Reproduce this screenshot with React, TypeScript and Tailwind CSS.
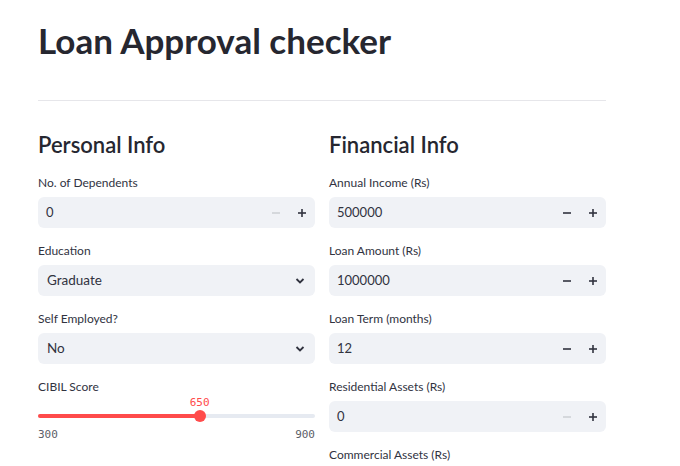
import React from "react";

const font = { fontFamily: 'Lato, "Noto Sans", sans-serif' };

function Label({ children }: { children: React.ReactNode }) {
  return (
    <div className="h-[16px] leading-[16px] text-[12px] text-[#31333f]">{children}</div>
  );
}

function Minus({ disabled }: { disabled?: boolean }) {
  return (
    <svg width="10" height="10" viewBox="0 0 10 10">
      <line x1="1" y1="5" x2="9" y2="5" stroke={disabled ? "#cfd1d6" : "#31333f"} strokeWidth="1.6" />
    </svg>
  );
}
function Plus() {
  return (
    <svg width="10" height="10" viewBox="0 0 10 10">
      <line x1="1" y1="5" x2="9" y2="5" stroke="#31333f" strokeWidth="1.6" />
      <line x1="5" y1="1" x2="5" y2="9" stroke="#31333f" strokeWidth="1.6" />
    </svg>
  );
}

function NumberInput({ label, value, minDisabled }: { label: string; value: string; minDisabled?: boolean }) {
  return (
    <div className="flex flex-col">
      <Label>{label}</Label>
      <div className="mt-[6px] h-[31px] rounded-[6px] bg-[#f0f2f6] flex items-center">
        <div className="flex-1 pl-[8px] text-[13px] text-[#31333f]">{value}</div>
        <div className="w-[26px] h-full flex items-center justify-center">
          <Minus disabled={minDisabled} />
        </div>
        <div className="w-[26px] h-full flex items-center justify-center">
          <Plus />
        </div>
      </div>
      <div className="h-[15px]" />
    </div>
  );
}

function Select({ label, value }: { label: string; value: string }) {
  return (
    <div className="flex flex-col">
      <Label>{label}</Label>
      <div className="mt-[6px] h-[31px] rounded-[6px] bg-[#f0f2f6] flex items-center">
        <div className="flex-1 pl-[9px] text-[13.5px] text-[#31333f]">{value}</div>
        <div className="w-[30px] flex items-center justify-center">
          <svg width="10" height="8" viewBox="0 0 10 8">
            <path d="M1.5 2 L5 5.5 L8.5 2" fill="none" stroke="#31333f" strokeWidth="1.8" />
          </svg>
        </div>
      </div>
      <div className="h-[15px]" />
    </div>
  );
}

function Slider() {
  const pct = (650 - 300) / 600;
  const mono = { fontFamily: '"DejaVu Sans Mono", "Liberation Mono", monospace' };
  return (
    <div className="flex flex-col">
      <Label>CIBIL Score</Label>
      <div className="relative h-[48px]">
        <div
          className="absolute top-[1px] text-[11px] leading-[14px] text-[#ff4b4b] -translate-x-1/2"
          style={{ ...mono, left: `${pct * 100}%` }}
        >
          650
        </div>
        <div className="absolute left-0 right-0 top-[19px] h-[4px] rounded-full bg-[#e6eaf1]" />
        <div
          className="absolute left-0 top-[19px] h-[4px] rounded-full bg-[#ff4b4b]"
          style={{ width: `${pct * 100}%` }}
        />
        <div
          className="absolute top-[15px] w-[12px] h-[12px] rounded-full bg-[#ff4b4b] -translate-x-1/2"
          style={{ left: `${pct * 100}%` }}
        />
        <div className="absolute left-0 right-0 top-[33px] flex justify-between text-[11px] leading-[14px] text-[#5c5e68]" style={mono}>
          <span>300</span>
          <span>900</span>
        </div>
      </div>
    </div>
  );
}

export default function App() {
  return (
    <div className="w-[680px] h-[466px] overflow-hidden bg-white" style={font}>
      <div className="ml-[38px] w-[568px] flex flex-col">
        <div className="mt-[20px] h-[40px] leading-[40px] text-[35px] font-bold text-[#262730]">
          Loan Approval checker
        </div>
        <div className="mt-[40px] h-px bg-[#e6e6ea]" />
        <div className="mt-[30px] grid grid-cols-2 gap-[14px]">
          <div className="flex flex-col">
            <div className="h-[28px] leading-[28px] text-[22px] font-semibold text-[#262730]">Personal Info</div>
            <div className="h-[16px]" />
            <NumberInput label="No. of Dependents" value="0" minDisabled />
            <Select label="Education" value="Graduate" />
            <Select label="Self Employed?" value="No" />
            <Slider />
          </div>
          <div className="flex flex-col">
            <div className="h-[28px] leading-[28px] text-[22px] font-semibold text-[#262730]">Financial Info</div>
            <div className="h-[16px]" />
            <NumberInput label="Annual Income (Rs)" value="500000" />
            <NumberInput label="Loan Amount (Rs)" value="1000000" />
            <NumberInput label="Loan Term (months)" value="12" />
            <NumberInput label="Residential Assets (Rs)" value="0" minDisabled />
            <Label>Commercial Assets (Rs)</Label>
          </div>
        </div>
      </div>
    </div>
  );
}
